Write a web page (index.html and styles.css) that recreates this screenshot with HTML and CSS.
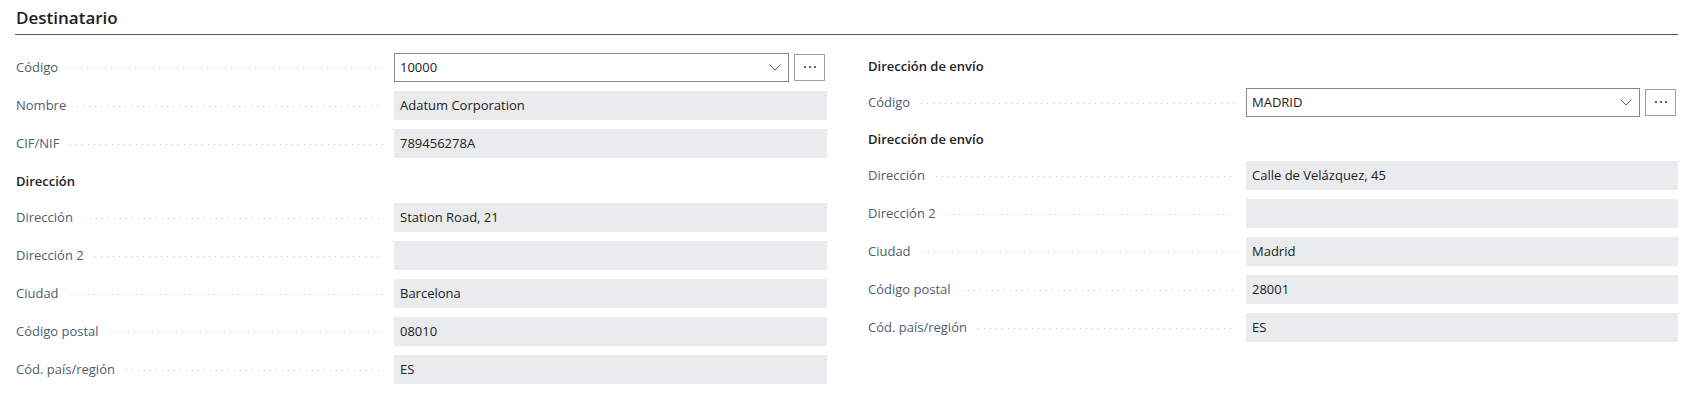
FILE: index.html
```html
<!DOCTYPE html>
<html lang="es">
<head>
<meta charset="utf-8">
<title>Destinatario</title>
<link rel="stylesheet" href="styles.css">
</head>
<body>
<div class="page">
  <div class="section-title">Destinatario</div>
  <div class="columns">
    <div class="col">
      <div class="row">
        <div class="label"><span>Código</span><span class="leader"></span></div>
        <div class="control">
          <div class="select"><span class="value">10000</span>
            <svg class="chev" width="12" height="7" viewBox="0 0 12 7"><path d="M0.5 0.5 L6 6 L11.5 0.5" fill="none" stroke="#605e5c" stroke-width="1"/></svg>
          </div>
          <div class="more"><span></span><span></span><span></span></div>
        </div>
      </div>
      <div class="row">
        <div class="label"><span>Nombre</span><span class="leader"></span></div>
        <div class="field">Adatum Corporation</div>
      </div>
      <div class="row">
        <div class="label"><span>CIF/NIF</span><span class="leader"></span></div>
        <div class="field">789456278A</div>
      </div>
      <div class="group-title">Dirección</div>
      <div class="row">
        <div class="label"><span>Dirección</span><span class="leader"></span></div>
        <div class="field">Station Road, 21</div>
      </div>
      <div class="row">
        <div class="label"><span>Dirección 2</span><span class="leader"></span></div>
        <div class="field"></div>
      </div>
      <div class="row">
        <div class="label"><span>Ciudad</span><span class="leader"></span></div>
        <div class="field">Barcelona</div>
      </div>
      <div class="row">
        <div class="label"><span>Código postal</span><span class="leader"></span></div>
        <div class="field">08010</div>
      </div>
      <div class="row">
        <div class="label"><span>Cód. país/región</span><span class="leader"></span></div>
        <div class="field">ES</div>
      </div>
    </div>
    <div class="col">
      <div class="group-title first">Dirección de envío</div>
      <div class="row">
        <div class="label"><span>Código</span><span class="leader"></span></div>
        <div class="control">
          <div class="select"><span class="value">MADRID</span>
            <svg class="chev" width="12" height="7" viewBox="0 0 12 7"><path d="M0.5 0.5 L6 6 L11.5 0.5" fill="none" stroke="#605e5c" stroke-width="1"/></svg>
          </div>
          <div class="more"><span></span><span></span><span></span></div>
        </div>
      </div>
      <div class="group-title compact">Dirección de envío</div>
      <div class="row">
        <div class="label"><span>Dirección</span><span class="leader"></span></div>
        <div class="field">Calle de Velázquez, 45</div>
      </div>
      <div class="row">
        <div class="label"><span>Dirección 2</span><span class="leader"></span></div>
        <div class="field"></div>
      </div>
      <div class="row">
        <div class="label"><span>Ciudad</span><span class="leader"></span></div>
        <div class="field">Madrid</div>
      </div>
      <div class="row">
        <div class="label"><span>Código postal</span><span class="leader"></span></div>
        <div class="field">28001</div>
      </div>
      <div class="row">
        <div class="label"><span>Cód. país/región</span><span class="leader"></span></div>
        <div class="field">ES</div>
      </div>
    </div>
  </div>
</div>
</body>
</html>
```
FILE: styles.css
```css
html, body {
  margin: 0;
  padding: 0;
  background: #ffffff;
}
body {
  font-family: "Open Sans", "Noto Sans", "Liberation Sans", sans-serif;
  font-size: 13px;
  color: #212121;
}
.page {
  padding: 0 14px 0 15px;
}
.section-title {
  height: 35px;
  box-sizing: border-box;
  padding: 6px 0 0 1px;
  font-size: 17px;
  font-weight: 600;
  line-height: 23px;
  color: #212121;
  border-bottom: 1px solid #505c6d;
}
.columns {
  display: grid;
  grid-template-columns: 812px 811px;
  column-gap: 40px;
  padding-top: 13px;
}
.row {
  display: grid;
  grid-template-columns: 379px 1fr;
  height: 38px;
  align-items: center;
}
.label {
  display: flex;
  align-items: center;
  color: #505c6d;
  padding-left: 1px;
  white-space: nowrap;
}
.leader {
  flex: 1;
  height: 2px;
  margin: 4px 11px 0 11px;
  background-image: linear-gradient(to right, #c8c8c8 0, #c8c8c8 1px, transparent 1px);
  background-size: 6px 1px;
  background-repeat: repeat-x;
  background-position: 0 0;
}
.field {
  height: 29px;
  box-sizing: border-box;
  background: #eaebed;
  padding: 0 6px;
  line-height: 29px;
  white-space: nowrap;
  overflow: hidden;
}
.control {
  display: flex;
  align-items: center;
  gap: 5px;
  padding-right: 2px;
}
.select {
  flex: 1;
  height: 29px;
  box-sizing: border-box;
  border: 1px solid #8a8886;
  display: flex;
  align-items: center;
  padding: 0 7px 0 5px;
}
.select .value {
  flex: 1;
}
.chev {
  display: block;
}
.more {
  width: 31px;
  height: 27px;
  box-sizing: border-box;
  border: 1px solid #a19f9d;
  display: flex;
  align-items: center;
  justify-content: center;
  gap: 3px;
}
.more span {
  width: 2px;
  height: 2px;
  background: #323130;
  border-radius: 1px;
}
.group-title {
  height: 36px;
  box-sizing: border-box;
  padding-top: 2px;
  display: flex;
  align-items: center;
  font-weight: 600;
  font-size: 13px;
  padding-left: 1px;
  color: #212121;
}
.group-title.first {
  height: 35px;
  padding-top: 1px;
}
.group-title.compact {
  height: 35px;
  padding-top: 0;
}
```
